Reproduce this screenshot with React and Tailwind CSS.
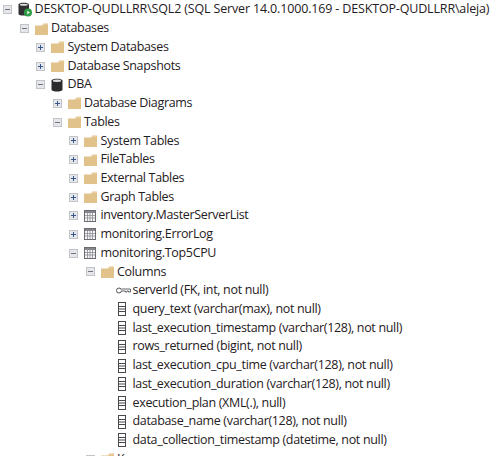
const LEVELS = ['pl-[3px]','pl-[19.5px]','pl-[36px]','pl-[52.5px]','pl-[69px]','pl-[85.5px]','pl-[116px]'];

function Expander({ open }) {
  return (
    <svg width="9" height="9" viewBox="0 0 9 9" className="shrink-0">
      <rect x="0.5" y="0.5" width="8" height="8" fill="#e6e7ea" stroke="#c2c4c9" />
      <rect x="2" y="4" width="5" height="1" fill={open ? '#70737b' : '#35568f'} />
      {!open && <rect x="4" y="2" width="1" height="5" fill="#35568f" />}
    </svg>
  );
}

function Folder() {
  return (
    <svg width="13" height="12" viewBox="0 0 13 12">
      <path d="M0 2.5h6.5L8.5 0.5H13V12H0z" fill="#e2c28b" />
      <path d="M6.8 3.2L8.8 1.2H12.5" stroke="#efdcb8" strokeWidth="0.8" fill="none" />
    </svg>
  );
}

function Database() {
  return (
    <svg width="12" height="14" viewBox="0 0 12 14">
      <path d="M0.5 2.5C0.5 0.3 11.5 0.3 11.5 2.5V11.5C11.5 14.2 0.5 14.2 0.5 11.5z" fill="#2b2b2e" />
      <ellipse cx="6" cy="2.7" rx="4.2" ry="1.2" fill="#dcdcdc" />
    </svg>
  );
}

function Server() {
  return (
    <svg width="14" height="15" viewBox="0 0 14 15">
      <path d="M0.5 2.5C0.5 0.3 11 0.3 11 2.5V12C11 14 0.5 14 0.5 12z" fill="#303033" />
      <ellipse cx="5.75" cy="2.7" rx="4" ry="1" fill="#dcdcdc" />
      <circle cx="10" cy="10.5" r="4" fill="#2e9e46" />
      <path d="M9.3 8.7l2.6 1.8-2.6 1.8z" fill="#fff" />
    </svg>
  );
}

function Table() {
  return (
    <svg width="12" height="12" viewBox="0 0 12 12">
      <rect x="0.5" y="0.5" width="11" height="11" fill="#f6f6f6" stroke="#6a6c71" />
      <rect x="1" y="1" width="10" height="2" fill="#85878c" />
      <path d="M3.5 3v8M6 3v8M8.5 3v8M1 5.5h10M1 8h10" stroke="#8b8d92" strokeWidth="0.8" />
    </svg>
  );
}

function Column() {
  return (
    <svg width="14" height="14" viewBox="0 0 14 14">
      <rect x="2.5" y="0.5" width="7" height="13" fill="#fff" stroke="#47484c" />
      <path d="M2.5 4.5h7M2.5 7h7M2.5 9.5h7" stroke="#47484c" strokeWidth="1" />
    </svg>
  );
}

function Key() {
  return (
    <svg width="15" height="14" viewBox="0 0 15 14">
      <circle cx="3" cy="6.5" r="2.5" fill="#fff" stroke="#55565a" strokeWidth="1" />
      <path d="M5.5 5h9v3H12.5V7h-1.5v1H9.5V7H5.5" fill="#fff" stroke="#55565a" strokeWidth="0.9" />
    </svg>
  );
}

const ICONS = { folder: Folder, db: Database, server: Server, table: Table, col: Column, key: Key };

const rows = [
  [0, 'open', 'server', 'DESKTOP-QUDLLRR\\SQL2 (SQL Server 14.0.1000.169 - DESKTOP-QUDLLRR\\aleja)', 'tracking-[-0.16px]'],
  [1, 'open', 'folder', 'Databases'],
  [2, 'closed', 'folder', 'System Databases'],
  [2, 'closed', 'folder', 'Database Snapshots'],
  [2, 'open', 'db', 'DBA'],
  [3, 'closed', 'folder', 'Database Diagrams'],
  [3, 'open', 'folder', 'Tables'],
  [4, 'closed', 'folder', 'System Tables'],
  [4, 'closed', 'folder', 'FileTables'],
  [4, 'closed', 'folder', 'External Tables'],
  [4, 'closed', 'folder', 'Graph Tables'],
  [4, 'closed', 'table', 'inventory.MasterServerList'],
  [4, 'closed', 'table', 'monitoring.ErrorLog'],
  [4, 'open', 'table', 'monitoring.Top5CPU'],
  [5, 'open', 'folder', 'Columns'],
  [6, null, 'key', 'serverId (FK, int, not null)'],
  [6, null, 'col', 'query_text (varchar(max), not null)'],
  [6, null, 'col', 'last_execution_timestamp (varchar(128), not null)'],
  [6, null, 'col', 'rows_returned (bigint, not null)'],
  [6, null, 'col', 'last_execution_cpu_time (varchar(128), not null)'],
  [6, null, 'col', 'last_execution_duration (varchar(128), not null)'],
  [6, null, 'col', 'execution_plan (XML(.), null)'],
  [6, null, 'col', 'database_name (varchar(128), not null)'],
  [6, null, 'col', 'data_collection_timestamp (datetime, not null)'],
  [5, 'closed', 'folder', 'Keys'],
];

export default function App() {
  return (
    <div className="w-[490px] h-[456px] overflow-hidden bg-white pt-[0.5px] font-['Open_Sans','Noto_Sans',sans-serif] text-[12.5px] tracking-[-0.33px] text-[#1f2023]">
      {rows.map(([level, state, icon, label, extra], i) => {
        const Icon = ICONS[icon];
        return (
          <div key={i} className={`flex items-center h-[18.72px] whitespace-nowrap ${LEVELS[level]}`}>
            {state ? (
              <span className="w-[15px] shrink-0 flex items-center"><Expander open={state === 'open'} /></span>
            ) : null}
            <span className="w-[15.5px] shrink-0 flex items-center"><Icon /></span>
            <span className={`ml-[1px] ${extra || ''}`}>{label}</span>
          </div>
        );
      })}
    </div>
  );
}
